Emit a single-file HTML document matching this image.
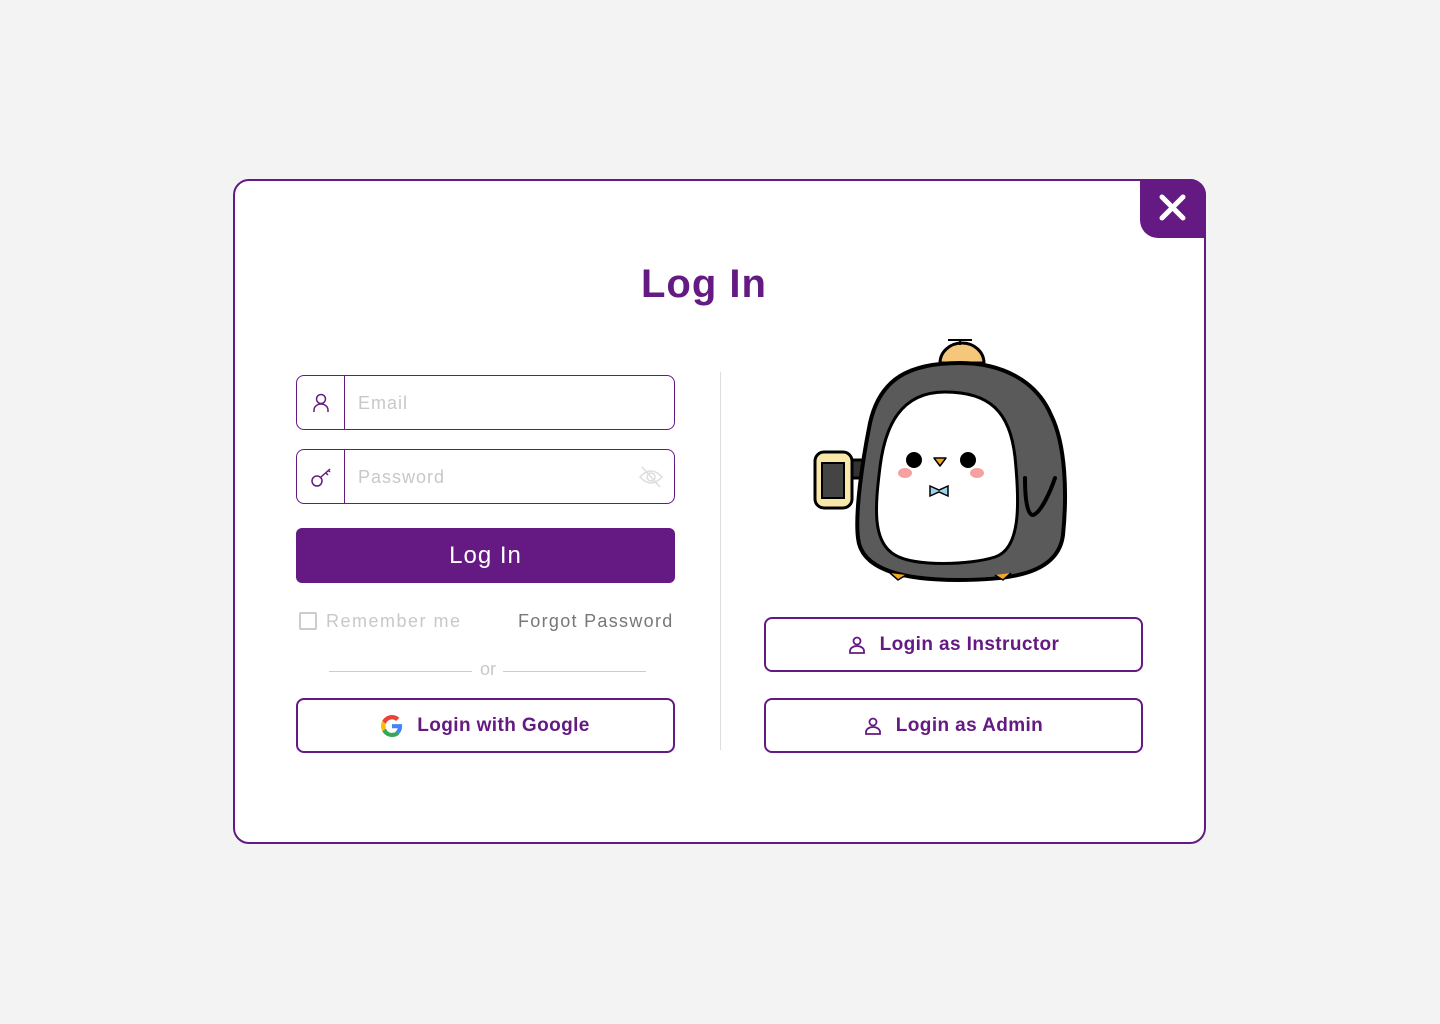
<!DOCTYPE html>
<html><head><meta charset="utf-8"><style>
*{box-sizing:border-box;margin:0;padding:0}
body{width:1440px;height:1024px;background:#f3f3f3;font-family:"Liberation Sans",sans-serif;position:relative;overflow:hidden}
.card{position:absolute;left:233px;top:179px;width:973px;height:665px;background:#fff;border:2px solid #641a82;border-radius:16px}
.close{position:absolute;left:1140px;top:179px;width:66px;height:59px;background:#641a82;border-radius:0 16px 0 18px}
h1{position:absolute;left:641px;top:262px;color:#641a82;font-size:40px;font-weight:bold;letter-spacing:1px}
.inp{position:absolute;left:296px;width:379px;height:55px;border:1px solid #641a82;border-radius:8px}
.inp .ic{position:absolute;left:0;top:0;width:48px;height:100%;border-right:1px solid #641a82}
.inp span{position:absolute;left:61px;top:17px;font-size:18px;color:#c8c8c8;letter-spacing:1px}
.btn{position:absolute;left:296px;top:528px;width:379px;height:55px;background:#641a82;border-radius:6px;color:#fff;font-size:24px;text-align:center;line-height:55px;letter-spacing:1px}
.ob{position:absolute;height:55px;border:2px solid #641a82;border-radius:8px;color:#641a82;font-size:19px;font-weight:bold;display:flex;align-items:center;justify-content:center;gap:14px;letter-spacing:0.4px}
.t{position:absolute;font-size:18px}
</style></head><body>
<div class="card"></div>
<div class="close"><svg width="66" height="59"><path d="M22 18L43 39M43 18L22 39" stroke="#fff" stroke-width="5" stroke-linecap="round"/></svg></div>
<h1>Log In</h1>
<div class="inp" style="top:375px"><div class="ic"><svg width="48" height="55"><circle cx="24" cy="23" r="4.5" fill="none" stroke="#641a82" stroke-width="1.5"/><path d="M17 36v-2a7 6 0 0 1 14 0v2" fill="none" stroke="#641a82" stroke-width="1.5"/></svg></div><span>Email</span></div>
<div class="inp" style="top:449px"><div class="ic"><svg width="48" height="55"><circle cx="20" cy="31" r="5" fill="none" stroke="#641a82" stroke-width="1.5"/><path d="M24 27l9-8M29 23l2 2M31 20l2 2" fill="none" stroke="#641a82" stroke-width="1.5"/></svg></div><span>Password</span>
<svg style="position:absolute;right:10px;top:15px" width="26" height="24"><path d="M2 12q11-12 22 0q-11 12-22 0z" fill="none" stroke="#ddd" stroke-width="1.5"/><circle cx="13" cy="12" r="4" fill="none" stroke="#ddd" stroke-width="1.5"/><path d="M4 2l18 20" stroke="#ddd" stroke-width="1.5"/></svg></div>
<div class="btn">Log In</div>
<div style="position:absolute;left:299px;top:612px;width:18px;height:18px;border:2px solid #ccc;border-radius:2px"></div>
<div class="t" style="left:326px;top:611px;color:#c8c8c8;letter-spacing:1.5px">Remember me</div>
<div class="t" style="left:518px;top:611px;color:#777;letter-spacing:1.3px">Forgot Password</div>
<div style="position:absolute;left:329px;top:671px;width:143px;height:1px;background:#ccc"></div>
<div style="position:absolute;left:503px;top:671px;width:143px;height:1px;background:#ccc"></div>
<div class="t" style="left:480px;top:659px;color:#c8c8c8">or</div>
<div class="ob" style="left:296px;top:698px;width:379px"><svg width="22" height="22" viewBox="0 0 48 48"><path fill="#EA4335" d="M24 9.5c3.5 0 6.6 1.2 9.1 3.6l6.8-6.8C35.8 2.4 30.3 0 24 0 14.6 0 6.6 5.4 2.7 13.3l7.9 6.1C12.5 13.6 17.8 9.5 24 9.5z"/><path fill="#4285F4" d="M46.1 24.5c0-1.6-.1-3.1-.4-4.5H24v9h12.4c-.5 2.9-2.200 5.3-4.6 7l7.2 5.6c4.2-3.9 7.1-9.7 7.1-17.1z"/><path fill="#FBBC05" d="M10.5 28.6c-.5-1.4-.8-3-.8-4.6s.3-3.200.8-4.6l-7.9-6.1C1 16.5 0 20.1 0 24s1 7.5 2.7 10.7l7.8-6.1z"/><path fill="#34A853" d="M24 48c6.5 0 11.9-2.1 15.9-5.8l-7.2-5.6c-2.2 1.5-5.1 2.4-8.7 2.4-6.2 0-11.5-4.2-13.4-9.9l-7.9 6.1C6.6 42.6 14.6 48 24 48z"/></svg>Login with Google</div>
<div style="position:absolute;left:720px;top:372px;width:1px;height:378px;background:#ddd"></div>
<div class="ob" style="left:764px;top:617px;width:379px"><svg width="18" height="18"><circle cx="9" cy="5" r="3.5" fill="none" stroke="#641a82" stroke-width="1.8"/><path d="M2 17v-2a7 5 0 0 1 14 0v2z" fill="none" stroke="#641a82" stroke-width="1.8"/></svg>Login as Instructor</div>
<div class="ob" style="left:764px;top:698px;width:379px"><svg width="18" height="18"><circle cx="9" cy="5" r="3.5" fill="none" stroke="#641a82" stroke-width="1.8"/><path d="M2 17v-2a7 5 0 0 1 14 0v2z" fill="none" stroke="#641a82" stroke-width="1.8"/></svg>Login as Admin</div>
<svg style="position:absolute;left:800px;top:330px" width="280" height="260" viewBox="0 0 280 260">
<path d="M140 33a22 20 0 0 1 44 0z" fill="#f5c77a" stroke="#000" stroke-width="3"/>
<path d="M148 10h24" stroke="#000" stroke-width="2"/>
<path d="M160 10v5" stroke="#000" stroke-width="2"/>
<rect x="48" y="130" width="30" height="18" fill="#333" stroke="#000" stroke-width="3"/>
<rect x="15" y="122" width="37" height="56" rx="9" fill="#f8e7a8" stroke="#000" stroke-width="3"/>
<rect x="22" y="133" width="22" height="35" fill="#444" stroke="#000" stroke-width="2"/>
<path d="M160 33c-50 0-80 15-90 60c-8 40-15 90-12 115c3 30 40 42 100 42c50 0 100-5 105-45c4-40 3-90-12-120c-15-35-50-52-91-52z" fill="#5a5a5a" stroke="#000" stroke-width="4"/>
<path d="M145 62c-45 0-60 35-65 75c-5 40-8 75 15 88c20 12 75 10 100 2c25-8 25-50 20-100c-5-45-25-65-70-65z" fill="#fff" stroke="#000" stroke-width="3"/>
<path d="M225 148c0 25 3 37 8 37c8-2 18-25 22-37" fill="none" stroke="#000" stroke-width="4" stroke-linecap="round"/>
<circle cx="114" cy="130" r="8" fill="#000"/><circle cx="168" cy="130" r="8" fill="#000"/>
<ellipse cx="105" cy="143" rx="7" ry="5" fill="#f7a0a0"/><ellipse cx="177" cy="143" rx="7" ry="5" fill="#f7a0a0"/>
<path d="M134 128h12l-6 8z" fill="#f5a623" stroke="#000" stroke-width="1.5" stroke-linejoin="round"/>
<path d="M130 156l9 4l9-4v10l-9-4l-9 4z" fill="#9ed3ee" stroke="#000" stroke-width="1.5"/>
<path d="M90 243l8 7l8-5M195 245l8 5l8-7" fill="#f5a623" stroke="#000" stroke-width="1.5"/>
</svg>
</body></html>
